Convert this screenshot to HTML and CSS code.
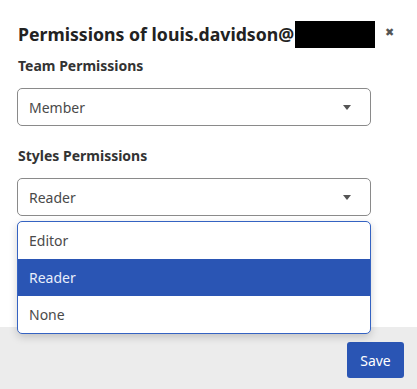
FILE: index.html
```html
<!DOCTYPE html>
<html lang="en">
<head>
    <meta charset="UTF-8">
    <title>Permissions</title>
    <link rel="stylesheet" href="styles.css">
</head>
<body>
    <div class="modal">
        <div class="modal-header">
            <h2 class="modal-title">Permissions of louis.davidson@<span class="redacted"></span></h2>
            <button class="close-btn" aria-label="Close">&#10006;</button>
        </div>

        <div class="modal-body">
            <label class="field-label">Team Permissions</label>
            <div class="select">
                <span class="select-value">Member</span>
                <span class="caret"></span>
            </div>

            <label class="field-label">Styles Permissions</label>
            <div class="select open">
                <span class="select-value">Reader</span>
                <span class="caret"></span>

                <!-- opened list -->
                <ul class="options">
                    <li class="option">Editor</li>
                    <li class="option selected">Reader</li>
                    <li class="option">None</li>
                </ul>
            </div>
        </div>

        <div class="modal-footer">
            <button class="save-btn">Save</button>
        </div>
    </div>
</body>
</html>
```

FILE: styles.css
```css
body {
    margin: 0;
    font-family: "Noto Sans", "Open Sans", sans-serif;
    color: #333;
    background: #fff;
}
.modal {
    width: 417px;
    height: 389px;
    display: flex;
    flex-direction: column;
    background: #fff;
}
.modal-header {
    display: flex;
    justify-content: space-between;
    align-items: flex-start;
    padding: 21px 23px 0 18px;
}
.modal-title {
    margin: 0;
    font-size: 17.7px;
    font-weight: 700;
    line-height: 27px;
    color: #222;
    display: flex;
    align-items: center;
}
.redacted {
    display: inline-block;
    width: 80px;
    height: 27px;
    background: #000;
    margin-left: 1px;
}
.close-btn {
    border: none;
    background: none;
    padding: 0;
    margin-top: 4px;
    font-size: 11px;
    line-height: 14px;
    color: #555;
    cursor: pointer;
}
.modal-body {
    flex: 1;
    padding: 8px 46px 0 17px;
}
.field-label {
    display: block;
    font-size: 14px;
    font-weight: 700;
    line-height: 20px;
    color: #333;
    margin-left: 1px;
    margin-bottom: 12px;
}
.select {
    position: relative;
    height: 36px;
    border: 1px solid #8a8a8a;
    border-radius: 5px;
    display: flex;
    align-items: center;
    justify-content: space-between;
    padding: 0 19px 0 11px;
    margin-bottom: 20px;
    font-size: 14px;
    color: #4a4a4a;
}
.caret {
    width: 0;
    height: 0;
    border-left: 4px solid transparent;
    border-right: 4px solid transparent;
    border-top: 5px solid #555;
}
.options {
    position: absolute;
    top: 42px;
    left: -1px;
    right: -1px;
    margin: 0;
    padding: 0;
    list-style: none;
    background: #fff;
    border: 1px solid #3563c2;
    border-radius: 5px;
    overflow: hidden;
    box-shadow: 0 3px 8px rgba(0, 0, 0, 0.18);
    z-index: 2;
}
.option {
    height: 37px;
    line-height: 37px;
    padding-left: 11px;
    color: #4a4a4a;
}
.option.selected {
    background: #2a55b4;
    color: #e8eefb;
}
.modal-footer {
    height: 62px;
    background: #ececec;
    display: flex;
    justify-content: flex-end;
    align-items: flex-start;
    padding: 15px 13px 0 0;
    box-sizing: border-box;
}
.save-btn {
    width: 57px;
    height: 36px;
    border: none;
    border-radius: 3px;
    background: #2a55b4;
    color: #fff;
    font-family: "Noto Sans", sans-serif;
    font-size: 14px;
    cursor: pointer;
}
```
